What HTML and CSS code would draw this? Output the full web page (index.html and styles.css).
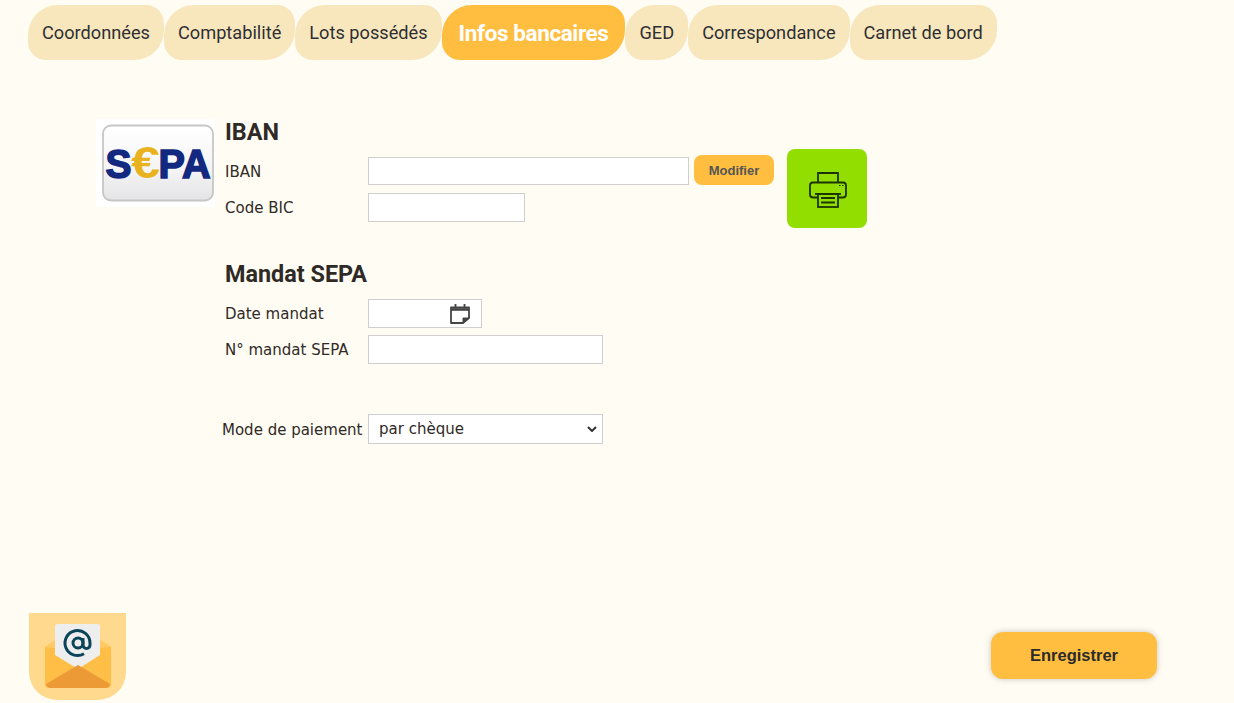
FILE: index.html
```html
<!DOCTYPE html>
<html lang="fr">
<head>
<meta charset="utf-8">
<title>Infos bancaires</title>
<link rel="stylesheet" href="styles.css">
</head>
<body>
<div class="page">
  <nav class="tabs">
    <a class="tab">Coordonnées</a>
    <a class="tab">Comptabilité</a>
    <a class="tab">Lots possédés</a>
    <a class="tab active">Infos bancaires</a>
    <a class="tab">GED</a>
    <a class="tab">Correspondance</a>
    <a class="tab">Carnet de bord</a>
  </nav>
  <main class="content">
    <div class="logo">
      <svg width="119" height="88" viewBox="0 0 119 88">
        <defs>
          <linearGradient id="card" x1="0" y1="0" x2="0" y2="1">
            <stop offset="0" stop-color="#ffffff"/>
            <stop offset="0.6" stop-color="#f4f4f5"/>
            <stop offset="1" stop-color="#e4e4e6"/>
          </linearGradient>
        </defs>
        <rect width="119" height="88" fill="#ffffff"/>
        <rect x="7" y="6.500" width="110" height="75" rx="8" fill="url(#card)" stroke="#c6c6c6" stroke-width="1.800"/>
        <text class="sepa-blue" x="9.500" y="58.500" textLength="26" lengthAdjust="spacingAndGlyphs">S</text>
        <text class="sepa-euro" x="35" y="59" textLength="29" lengthAdjust="spacingAndGlyphs">€</text>
        <text class="sepa-blue" x="62.500" y="58.500" textLength="52" lengthAdjust="spacingAndGlyphs">PA</text>
      </svg>
    </div>
    <div class="forms">
      <section class="iban-block">
        <div class="iban-fields">
          <h2 class="title">IBAN</h2>
          <div class="row">
            <label class="label">IBAN</label>
            <input class="field field-iban" type="text">
            <button class="btn-small" type="button">Modifier</button>
          </div>
          <div class="row">
            <label class="label">Code BIC</label>
            <input class="field field-bic" type="text">
          </div>
        </div>
        <button class="print" type="button" aria-label="Imprimer">
          <svg width="42" height="38" viewBox="0 0 42 38" fill="none" stroke="#1c3400" stroke-width="1.800">
            <path d="M11 12.500V3h20v9.500"/>
            <path d="M11 27.500H6a3 3 0 0 1-3-3v-9a3 3 0 0 1 3-3h30a3 3 0 0 1 3 3v9a3 3 0 0 1-3 3h-5"/>
            <path d="M8 24h26"/>
            <rect x="11" y="24" width="20" height="13"/>
            <path d="M14 28h14M14 32.500h14" stroke-width="1.800"/>
            <path d="M32 15.500h1.500M35 15.500h1.500" stroke-width="1.200"/>
          </svg>
        </button>
      </section>
      <section class="mandat">
        <h2 class="title">Mandat SEPA</h2>
        <div class="row">
          <label class="label">Date mandat</label>
          <div class="field field-date">
            <svg width="22" height="22" viewBox="0 0 22 22" fill="none" stroke="#444444" stroke-width="1.800">
              <path d="M14 20H2V4.500h18V15z" stroke-linejoin="round"/>
              <path d="M2 6.500h18" stroke-width="2.600"/>
              <path d="M6.500 1V4.500M15.500 1V4.500"/>
              <path d="M14 20v-5h6z" fill="#444444" stroke-width="1"/>
            </svg>
          </div>
        </div>
        <div class="row row-num">
          <label class="label">N° mandat SEPA</label>
          <input class="field field-wide" type="text">
        </div>
      </section>
      <section class="mode">
        <label class="label label-mode">Mode de paiement</label>
        <select class="field field-select">
          <option>par chèque</option>
        </select>
      </section>
    </div>
  </main>
  <footer class="footer">
    <div class="mail">
      <svg width="66" height="65" viewBox="0 0 66 65">
        <path d="M0 23 33 2l33 21v37a4 4 0 0 1-4 4H4a4 4 0 0 1-4-4z" fill="#ffbf47"/>
        <path d="M0 23 10 16v8zM66 23 55 16v8z" fill="#ffca66"/>
        <path d="M13 0h39a3 3 0 0 1 3 3v28L33 45 10 31V3a3 3 0 0 1 3-3z" fill="#eeeeee"/>
        <path d="M1 60 33 41l32 19a5 5 0 0 1-4 4H5a5 5 0 0 1-4-4z" fill="#ec9a35"/>
        <g fill="none" stroke="#0c4459" stroke-width="3">
          <circle cx="33" cy="19" r="5"/>
          <path d="M38 14v7a3.500 3.500 0 0 0 7 0v-2a12.500 12.500 0 1 0-6 10.700"/>
        </g>
      </svg>
    </div>
    <button class="save" type="button">Enregistrer</button>
  </footer>
</div>
</body>
</html>
```
FILE: styles.css
```css
* {
  box-sizing: border-box;
}

html,
body {
  margin: 0;
  height: 100%;
  overflow: hidden;
  background: #fffcf4;
}

.page {
  height: 703px;
  display: flex;
  flex-direction: column;
  color: #2b2b2b;
}

.tabs {
  display: flex;
  padding: 5px 0 0 28px;
}

.tab {
  height: 55px;
  padding: 0 14px;
  display: flex;
  align-items: center;
  background: #f8e7bc;
  border-radius: 30px 18px 30px 18px;
  font: 18.2px Roboto, sans-serif;
  color: #2f2f33;
  white-space: nowrap;
}

.tab.active {
  padding: 0 17px;
  background: #ffbe40;
  color: #ffffff;
  font-weight: 700;
  font-size: 22.5px;
  letter-spacing: -0.4px;
}

.content {
  display: flex;
  align-items: flex-start;
  padding: 59px 0 0 96px;
}

.logo {
  width: 119px;
  height: 88px;
  flex: none;
  margin-right: 10px;
}

.logo svg {
  display: block;
}

.sepa-blue {
  font: 700 41px "Liberation Sans", sans-serif;
  fill: #12297f;
  stroke: #12297f;
  stroke-width: 1.6px;
}

.sepa-euro {
  font: 700 45px "Liberation Sans", sans-serif;
  fill: #e9b221;
}

.forms {
  display: flex;
  flex-direction: column;
}

.iban-block {
  display: flex;
  align-items: flex-start;
}

.iban-fields {
  display: flex;
  flex-direction: column;
}

.title {
  margin: 0;
  height: 30px;
  font: 700 23.4px/27px Roboto, sans-serif;
  color: #2f2a25;
}

.row {
  display: flex;
  align-items: center;
  margin-top: 8px;
}

.row-num {
  margin-top: 7px;
}

.label {
  width: 143px;
  flex: none;
  padding-top: 1px;
  font: 15px "DejaVu Sans", Verdana, sans-serif;
  color: #2f2a25;
  white-space: nowrap;
}

.field {
  height: 29px;
  border: 1px solid #cfcfcf;
  background: #ffffff;
  padding: 0 10px;
  margin: 0;
  border-radius: 0;
  font: 15px "DejaVu Sans", Verdana, sans-serif;
  color: #2f2a25;
}

.field-iban {
  width: 321px;
  height: 28px;
}

.field-bic {
  width: 157px;
}

.field-date {
  width: 114px;
  display: flex;
  align-items: center;
  justify-content: flex-end;
  padding: 0 10px 0 0;
}

.field-wide,
.field-select {
  width: 235px;
}

.field-select {
  height: 30px;
  padding: 0 10px;
  appearance: none;
  background: #ffffff url("data:image/svg+xml,%3Csvg xmlns='http://www.w3.org/2000/svg' width='10' height='6' viewBox='0 0 10 6'%3E%3Cpath d='M1 1l4 4 4-4' fill='none' stroke='%23333333' stroke-width='2'/%3E%3C/svg%3E") no-repeat right 5px center;
}

.btn-small {
  width: 80px;
  height: 30px;
  margin: -2px 0 0 5px;
  border: 0;
  border-radius: 8px;
  background: #ffbe40;
  color: #555555;
  font: 700 13px "Liberation Sans", Arial, sans-serif;
  padding: 0;
}

.print {
  width: 80px;
  height: 79px;
  margin: 30px 0 0 13px;
  padding: 0 0 0 2px;
  border: 0;
  border-radius: 8px;
  background: #92de00;
  display: flex;
  align-items: center;
  justify-content: center;
}

.mandat {
  margin-top: 33px;
}

.mode {
  display: flex;
  align-items: center;
  margin-top: 50px;
}

.label-mode {
  width: 146px;
  margin-left: -3px;
  padding-right: 6px;
  text-align: right;
}

.footer {
  margin-top: auto;
  display: flex;
  align-items: center;
  justify-content: space-between;
  padding: 0 77px 3px 29px;
}

.mail {
  width: 97px;
  height: 87px;
  background: #ffd98e;
  border-radius: 0 0 28px 28px;
  display: flex;
  align-items: flex-start;
  justify-content: center;
  padding-top: 11px;
}

.mail svg {
  display: block;
}

.save {
  width: 166px;
  height: 47px;
  margin-bottom: 2px;
  border: 0;
  border-radius: 12px;
  background: #ffbe40;
  box-shadow: 0 0 6px rgba(0, 0, 0, 0.22);
  color: #2b2b2b;
  font: 700 16.5px "Liberation Sans", Arial, sans-serif;
  padding: 0;
}
```
